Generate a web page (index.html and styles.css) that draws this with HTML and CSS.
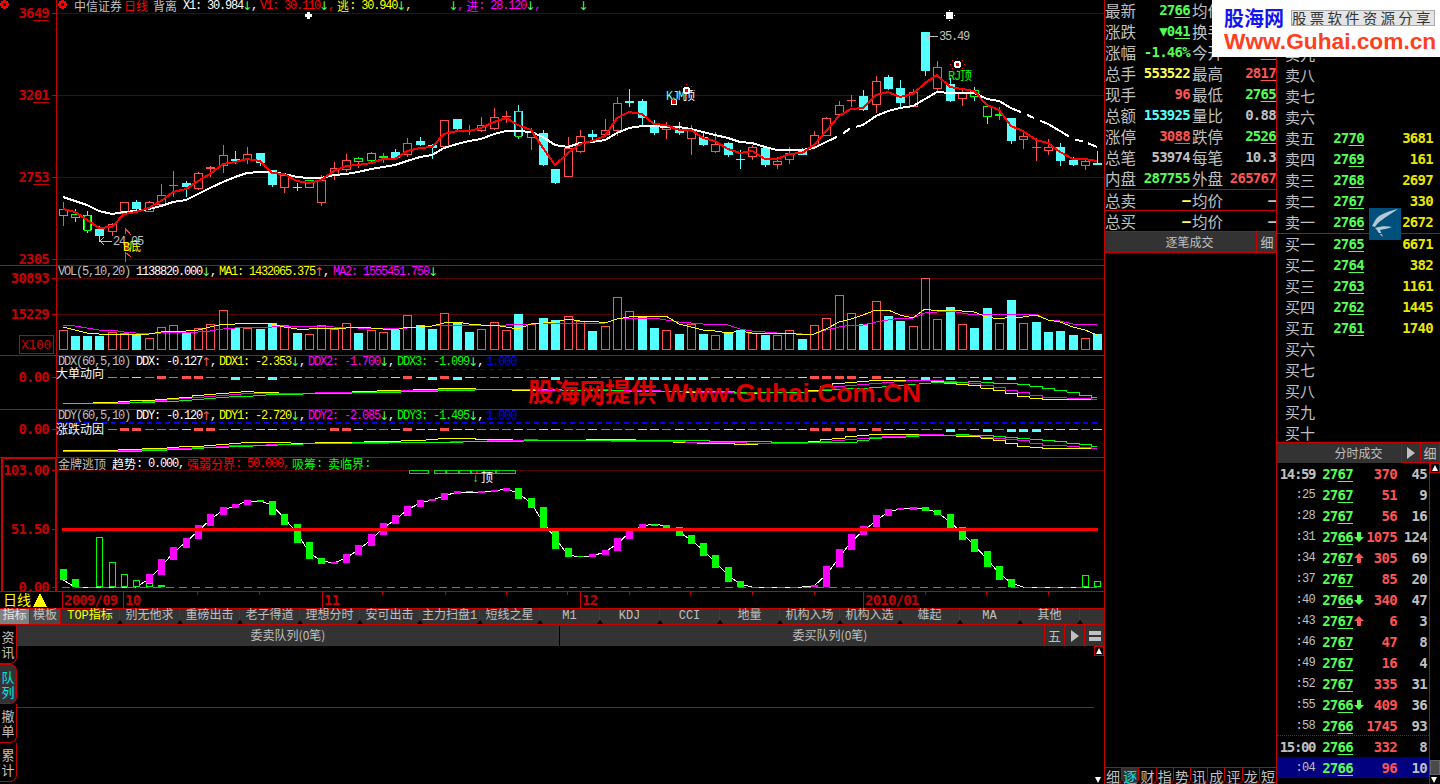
FILE: index.html
```html
<!DOCTYPE html>
<html lang="zh-CN">
<head>
<meta charset="utf-8">
<title>中信证券 日线</title>
<link rel="stylesheet" href="styles.css">
</head>
<body>
<div class="app">
  <div class="left">
    <section class="panel p-main">
      <svg class="plot" id="main" width="1104" height="265"></svg>
      <div class="title t-main"><span class="cn gray">中信证券</span><span class="cn red g2">日线</span><span class="cn gray g5">背离</span><span class="white g6">X1: 30.984</span><i class="ar dn">↓</i><span class="white">,</span><span class="red g3">V1: 30.110</span><i class="ar dn">↓</i><span class="red">,</span><span class="cn yellow g3">逃</span><span class="yellow">: 30.940</span><i class="ar dn">↓</i><span class="yellow">,</span><i class="ar dn g38">↓</i><span class="magenta">,</span><span class="cn magenta g3">进</span><span class="magenta">: 28.120</span><i class="ar dn">↓</i><span class="magenta">,</span><i class="ar dn g39">↓</i></div>
    </section>
    <section class="panel p-vol">
      <svg class="plot" id="vol" width="1104" height="89"></svg>
      <div class="title"><span class="gray">VOL(5,10,20) </span><span class="white">1138820.000</span><i class="ar dn">↓</i><span class="white">,</span><span class="yellow g3">MA1: 1432065.375</span><i class="ar up">↑</i><span class="white">,</span><span class="magenta g4">MA2: 1555451.750</span><i class="ar dn">↓</i></div>
    </section>
    <section class="panel p-ddx">
      <svg class="plot" id="ddx" width="1104" height="53"></svg>
      <div class="title"><span class="gray">DDX(60,5,10) </span><span class="white">DDX: -0.127</span><i class="ar up">↑</i><span class="white">,</span><span class="yellow g3">DDX1: -2.353</span><i class="ar dn">↓</i><span class="white">,</span><span class="magenta g3">DDX2: -1.700</span><i class="ar dn">↓</i><span class="white">,</span><span class="green g3">DDX3: -1.099</span><i class="ar dn">↓</i><span class="white">,</span><span class="blue g3">1.000</span></div>
      <div class="subname">大单动向</div>
    </section>
    <section class="panel p-ddy">
      <svg class="plot" id="ddy" width="1104" height="47"></svg>
      <div class="title"><span class="gray">DDY(60,5,10) </span><span class="white">DDY: -0.120</span><i class="ar up">↑</i><span class="white">,</span><span class="yellow g3">DDY1: -2.720</span><i class="ar dn">↓</i><span class="white">,</span><span class="magenta g3">DDY2: -2.085</span><i class="ar dn">↓</i><span class="white">,</span><span class="green g3">DDY3: -1.495</span><i class="ar dn">↓</i><span class="white">,</span><span class="blue g3">1.000</span></div>
      <div class="subname sub-ddy">涨跌动因</div>
    </section>
    <section class="panel p-gold">
      <svg class="plot" id="gold" width="1104" height="133"></svg>
      <div class="title"><span class="cn gray">金牌逃顶</span><span class="cn white g6">趋势</span><span class="white">: 0.000,</span><span class="cn red g3">强弱分界</span><span class="red">: 50.000,</span><span class="cn bright g3">吸筹</span><span class="bright">: </span><span class="cn bright">卖临界</span><span class="bright">:</span></div>
    </section>
    <section class="panel p-axis">
      <svg class="plot" id="axis" width="1104" height="16"></svg>
    </section>
    <nav class="tabs">
      <a class="tab t-sel">指标</a><a class="tab t-sel2">模板</a><a class="tab t-wide t-top">TOP指标</a><a class="tab t-wide">别无他求</a><a class="tab t-wide">重磅出击</a><a class="tab t-wide">老子得道</a><a class="tab t-wide">理想分时</a><a class="tab t-wide">安可出击</a><a class="tab t-wide">主力扫盘1</a><a class="tab t-wide">短线之星</a><a class="tab t-wide">M1</a><a class="tab t-wide">KDJ</a><a class="tab t-wide">CCI</a><a class="tab t-wide">地量</a><a class="tab t-wide">机构入场</a><a class="tab t-wide">机构入选</a><a class="tab t-wide">雄起</a><a class="tab t-wide">MA</a><a class="tab t-wide">其他</a><a class="tab t-last"></a>
    </nav>
    <section class="queue">
      <nav class="vtabs">
        <a class="vtab">资<br>讯</a><a class="vtab v-on">队<br>列</a><a class="vtab">撤<br>单</a><a class="vtab">累<br>计</a>
      </nav>
      <div class="qmain">
        <header class="qhead">
          <div class="qh-sell">委卖队列(0笔)</div>
          <div class="qh-buy">委买队列(0笔)</div>
          <div class="qbtn">五</div>
          <div class="qbtn"><svg class="tri" viewBox="0 0 8 12"><path d="M0 0l8 6-8 6z"/></svg></div>
          <div class="qbtn"><svg class="eq" viewBox="0 0 12 10"><path d="M0 0h12v4H0zM0 6h12v4H0z"/></svg></div>
        </header>
        <div class="qbody">
          <div class="qrows"><div class="qrow"></div><div class="qrow2"></div></div>
          <div class="scroll">
            <div class="sbtn"><svg viewBox="0 0 8 8"><path d="M4 1l3 6H1z"/></svg></div>
            <div class="sbtn sbtn-d"><svg viewBox="0 0 8 8"><path d="M1 1h6L4 7z"/></svg></div>
          </div>
        </div>
      </div>
    </section>
    <div class="wm"><span class="wm-cn">股海网提供</span> Www.Guhai.Com.CN</div>
  </div>

  <aside class="mid">
    <div class="quote">
      <div class="qr"><b>最新</b><span class="v lg">27<u>66</u></span><b>均价</b><span class="v"></span></div>
      <div class="qr"><b>涨跌</b><span class="v lg">▼0<u>41</u></span><b>换手</b><span class="v"></span></div>
      <div class="qr"><b>涨幅</b><span class="v lg">-1.46%</span><b>今开</b><span class="v lr">27<u>77</u></span></div>
      <div class="qr"><b>总手</b><span class="v ly">553522</span><b>最高</b><span class="v lr">28<u>17</u></span></div>
      <div class="qr"><b>现手</b><span class="v lr">96</span><b>最低</b><span class="v lg">27<u>65</u></span></div>
      <div class="qr"><b>总额</b><span class="v lc">153925</span><b>量比</b><span class="v lw">0.88</span></div>
      <div class="qr"><b>涨停</b><span class="v lr">30<u>88</u></span><b>跌停</b><span class="v lg">25<u>26</u></span></div>
      <div class="qr"><b>总笔</b><span class="v lw">53974</span><b>每笔</b><span class="v lw">10.3</span></div>
      <div class="qr"><b>内盘</b><span class="v lg">287755</span><b>外盘</b><span class="v lr">265767</span></div>
      <div class="qr qr-t"><b>总卖</b><span class="v ly">—</span><b>均价</b><span class="v lw">—</span></div>
      <div class="qr qr-t"><b>总买</b><span class="v ly">—</span><b>均价</b><span class="v lw">—</span></div>
    </div>
    <div class="mhead"><div class="mh-t">逐笔成交</div><div class="mh-b">细</div></div>
    <div class="mspace"></div>
    <nav class="btabs"><a>细</a><a class="on">逐</a><a>财</a><a>指</a><a>势</a><a>讯</a><a>成</a><a>评</a><a>龙</a><a>短</a></nav>
  </aside>

  <aside class="right">
    <div class="book">
      <div class="br"><b>卖十</b></div>
      <div class="br"><b>卖九</b></div>
      <div class="br"><b>卖八</b></div>
      <div class="br"><b>卖七</b></div>
      <div class="br"><b>卖六</b></div>
      <div class="br"><b>卖五</b><span class="v lg">27<u>70</u></span><span class="v by">3681</span></div>
      <div class="br"><b>卖四</b><span class="v lg">27<u>69</u></span><span class="v by">161</span></div>
      <div class="br"><b>卖三</b><span class="v lg">27<u>68</u></span><span class="v by">2697</span></div>
      <div class="br"><b>卖二</b><span class="v lg">27<u>67</u></span><span class="v by">330</span></div>
      <div class="br"><b>卖一</b><span class="v lg">27<u>66</u></span><span class="v by">2672</span></div>
    </div>
    <div class="book book-buy">
      <div class="br"><b>买一</b><span class="v lg">27<u>65</u></span><span class="v by">6671</span></div>
      <div class="br"><b>买二</b><span class="v lg">27<u>64</u></span><span class="v by">382</span></div>
      <div class="br"><b>买三</b><span class="v lg">27<u>63</u></span><span class="v by">1161</span></div>
      <div class="br"><b>买四</b><span class="v lg">27<u>62</u></span><span class="v by">1445</span></div>
      <div class="br"><b>买五</b><span class="v lg">27<u>61</u></span><span class="v by">1740</span></div>
      <div class="br"><b>买六</b></div>
      <div class="br"><b>买七</b></div>
      <div class="br"><b>买八</b></div>
      <div class="br"><b>买九</b></div>
      <div class="br"><b>买十</b></div>
    </div>
    <svg class="bird" viewBox="0 0 32 32"><rect width="32" height="32" fill="#00507e"/><path d="M29 1C20 3 11 6 7 11L3 18l3 1c3-5 7-7 11-10 4-3 8-5 12-8z" fill="#b5c9d3"/><path d="M6 20c6-2 12-2 17-1-5 2-9 2-12 3l3 7c-3-2-5-5-6-7z" fill="#b5c9d3"/></svg>
    <div class="rhead"><div class="rh-t">分时成交</div><div class="rh-b"><svg class="tri" viewBox="0 0 8 12"><path d="M0 0l8 6-8 6z"/></svg></div><div class="rh-b">细</div></div>
    <div class="tickwrap">
      <div class="ticks">
        <div class="tk"><span class="tm tm-b">14:59</span><span class="v lg">27<u>67</u></span><i></i><span class="v lr">370</span><span class="v lw">45</span></div>
        <div class="tk"><span class="tm">:25</span><span class="v lg">27<u>67</u></span><i></i><span class="v lr">51</span><span class="v lw">9</span></div>
        <div class="tk"><span class="tm">:28</span><span class="v lg">27<u>67</u></span><i></i><span class="v lr">56</span><span class="v lw">16</span></div>
        <div class="tk"><span class="tm">:31</span><span class="v lg">27<u>66</u></span><i><svg class="tka dn" viewBox="0 0 10 10"><path d="M3 0h4v5h3L5 10 0 5h3z"/></svg></i><span class="v lr">1075</span><span class="v lw">124</span></div>
        <div class="tk"><span class="tm">:34</span><span class="v lg">27<u>67</u></span><i><svg class="tka up" viewBox="0 0 10 10"><path d="M5 0l5 5H7v5H3V5H0z"/></svg></i><span class="v lr">305</span><span class="v lw">69</span></div>
        <div class="tk"><span class="tm">:37</span><span class="v lg">27<u>67</u></span><i></i><span class="v lr">85</span><span class="v lw">20</span></div>
        <div class="tk"><span class="tm">:40</span><span class="v lg">27<u>66</u></span><i><svg class="tka dn" viewBox="0 0 10 10"><path d="M3 0h4v5h3L5 10 0 5h3z"/></svg></i><span class="v lr">340</span><span class="v lw">47</span></div>
        <div class="tk"><span class="tm">:43</span><span class="v lg">27<u>67</u></span><i><svg class="tka up" viewBox="0 0 10 10"><path d="M5 0l5 5H7v5H3V5H0z"/></svg></i><span class="v lr">6</span><span class="v lw">3</span></div>
        <div class="tk"><span class="tm">:46</span><span class="v lg">27<u>67</u></span><i></i><span class="v lr">47</span><span class="v lw">8</span></div>
        <div class="tk"><span class="tm">:49</span><span class="v lg">27<u>67</u></span><i></i><span class="v lr">16</span><span class="v lw">4</span></div>
        <div class="tk"><span class="tm">:52</span><span class="v lg">27<u>67</u></span><i></i><span class="v lr">335</span><span class="v lw">31</span></div>
        <div class="tk"><span class="tm">:55</span><span class="v lg">27<u>66</u></span><i><svg class="tka dn" viewBox="0 0 10 10"><path d="M3 0h4v5h3L5 10 0 5h3z"/></svg></i><span class="v lr">409</span><span class="v lw">36</span></div>
        <div class="tk tk-dot"><span class="tm">:58</span><span class="v lg">27<u>66</u></span><i></i><span class="v lr">1745</span><span class="v lw">93</span></div>
        <div class="tk"><span class="tm tm-b">15:00</span><span class="v lg">27<u>66</u></span><i></i><span class="v lr">332</span><span class="v lw">8</span></div>
        <div class="tk tk-on"><span class="tm">:04</span><span class="v lg">27<u>66</u></span><i></i><span class="v lr">96</span><span class="v lw">10</span></div>
      </div>
      <div class="scroll scroll-r">
        <div class="sbtn"><svg viewBox="0 0 8 8"><path d="M4 1l3 6H1z"/></svg></div>
        <div class="sthumb"></div>
        <div class="sbtn sbtn-d"><svg viewBox="0 0 8 8"><path d="M1 1h6L4 7z"/></svg></div>
      </div>
    </div>
  </aside>

  <div class="logo">
    <div class="logo-top"><span class="logo-cn">股海网</span><span class="logo-tag">股票软件资源分享</span></div>
    <div class="logo-url">Www.Guhai.com.cn</div>
  </div>
</div>
<script src="app.js"></script>
</body>
</html>
```
FILE: styles.css
```css
html,body{margin:0;padding:0;background:#000;overflow:hidden}
a{display:block}
b{font-weight:400}
u{text-decoration:underline;text-decoration-thickness:1px;text-underline-offset:2px}
.app{position:relative;display:grid;grid-template-columns:1105px 172px 163px;width:1440px;height:784px;overflow:hidden;color:#c0c0c0;font-family:"Noto Sans CJK SC",sans-serif}

/* left column */
.left{position:relative;display:flex;flex-direction:column;width:1105px;height:784px;box-sizing:border-box;border-right:1px solid #c80000}
.panel{position:relative;box-sizing:border-box;border-bottom:1px solid #c80000;flex:none}
.p-main{height:266px}.p-vol{height:90px}.p-ddx{height:54px}.p-ddy{height:48px}.p-gold{height:134px}
.p-axis{height:16px;border-bottom:0}
.plot{display:block;overflow:visible}
.plot *{shape-rendering:crispEdges}
.plot text{font-family:"DejaVu Sans Mono",monospace;letter-spacing:-.8px;font-weight:700;font-size:14px;fill:#c80000}
.plot text.ax-s{font-weight:400;font-size:13px;letter-spacing:-.3px}
.plot text.cjk{font-family:"Noto Sans CJK SC",sans-serif;font-weight:400;letter-spacing:0;font-size:12px}
.plot text.sm{font-family:"Liberation Mono",monospace;font-weight:400;font-size:12px;letter-spacing:-1.2px;fill:#c0c0c0}
.plot text.ydate{font-family:"Noto Sans CJK SC",sans-serif;font-weight:400;letter-spacing:0;font-size:14px;fill:#ffff00}

.title{position:absolute;left:58px;top:0;display:flex;white-space:pre;font:12px/12px "Liberation Mono",monospace;letter-spacing:-1.2px}
.t-main{left:74px}
.title .cn{font-family:"Noto Sans CJK SC",sans-serif;letter-spacing:0}
.ar{display:flex;justify-content:center;width:8px;font-style:normal;font-family:"DejaVu Sans",sans-serif;font-size:12px;letter-spacing:0}
.ar.dn{color:#54ff54}.ar.up{color:#ff5454}
.gray{color:#c0c0c0}.white{color:#fff}.red{color:#ff0000}.yellow{color:#ffff00}.magenta{color:#ff00ff}.green,.bright{color:#00ff00}.blue{color:#0000ff}
.g2{margin-left:2px}.g3{margin-left:3px}.g4{margin-left:4px}.g5{margin-left:5px}.g6{margin-left:6px}.g38{margin-left:38px}.g39{margin-left:39px}
.subname{position:absolute;left:56px;top:10px;font-size:12px;line-height:14px;color:#fff}
.sub-ddy{top:12px}
.wm{position:absolute;left:528px;top:376px;white-space:nowrap;font:700 26.3px/30px "Liberation Sans",sans-serif;color:#dc0000}
.wm-cn{font-family:"Noto Sans CJK SC",sans-serif;font-size:26px;letter-spacing:-.4px}

/* indicator tabs */
.tabs{display:flex;flex:none;height:17px;box-sizing:border-box;border-top:1px solid #c80000;border-bottom:1px solid #c80000}
.tab{position:relative;flex:none;box-sizing:border-box;background:#333;border-right:1px solid #c80000;font:12px/15px "Liberation Mono","Noto Sans CJK SC",monospace;text-align:center;color:#c0c0c0;overflow:visible}
.tab::after{content:"";position:absolute;right:-4px;bottom:0;width:0;height:0;border-left:3px solid transparent;border-right:3px solid transparent;border-bottom:4px solid #000;z-index:2}
.t-sel{width:30px;background:#808080;color:#e6e6e6}
.t-sel2{width:31px;background:#4a4a4a}
.t-sel::after,.t-sel2::after{display:none}
.t-wide{width:60px}
.t-top{width:59px;color:#ffff00}
.t-last{flex:1;border-right:0}
.t-last::after{display:none}

/* queue */
.queue{flex:1;display:grid;grid-template-columns:17px 1fr;min-height:0}
.vtabs{display:flex;flex-direction:column;background:#000}
.vtab{flex:none;height:39px;box-sizing:border-box;background:#000;border:solid #c80000;border-width:0 1px 1px 0;border-radius:0 0 7px 0;font-size:13px;line-height:15px;padding-top:4px;text-align:center;color:#c0c0c0}
.v-on{height:40px;background:#333;color:#00e6e6;border-radius:0 7px 7px 0;border-top:1px solid #c80000}
.qmain{display:flex;flex-direction:column;min-width:0}
.qhead{flex:none;display:flex;height:21px;background:#333;font:12px/20px "Noto Sans CJK SC",sans-serif;text-align:center}
.qh-sell{width:543px;border-right:1px solid #000;box-sizing:border-box}
.qh-buy{width:484px;box-sizing:border-box;padding-left:56px}
.qbtn{flex:none;width:20px;box-sizing:border-box;border-left:1px solid #c80000;display:flex;align-items:center;justify-content:center;font-size:13px}
.tri{width:8px;height:12px;fill:#c0c0c0}
.eq{width:12px;height:10px;fill:#c0c0c0}
.qbody{flex:1;display:flex;min-height:0}
.qrows{flex:1;display:flex;flex-direction:column}
.qrow{height:61px;border-bottom:1px solid #c80000;flex:none}
.qrow2{flex:1}
.scroll{flex:none;width:10px;display:flex;flex-direction:column;background:#000}
.sbtn{flex:none;height:10px;box-sizing:border-box;border:1px solid #c80000;background:#000;display:flex}
.sbtn svg{width:8px;height:8px;fill:#fff}
.sbtn-d{margin-top:auto;border:0;height:8px}
.sthumb{flex:none;margin-top:auto;height:15px;background:#4a4a4a;border:1px solid #666;box-sizing:border-box}
.sthumb+.sbtn-d{margin-top:1px}

/* middle column */
.mid{display:flex;flex-direction:column;height:784px;box-sizing:border-box}
.quote{flex:none}
.qr{display:grid;grid-template-columns:32px 53px 33px 53px;height:21px;box-sizing:border-box;padding-bottom:2px;line-height:18px;align-items:center}
.qr b{font-size:15.5px;color:#c0c0c0;white-space:nowrap}
.qr b:nth-child(3){padding-left:2px}
.qr-t{border-top:1px solid #c80000;padding-bottom:1px}
.v{font:700 14px/18px "DejaVu Sans Mono",monospace;letter-spacing:-.72px;text-align:right;white-space:nowrap}
.lg{color:#54ff54}.lr{color:#ff5454}.ly{color:#ffff54}.lc{color:#54ffff}.lw{color:#c0c0c0}.by{color:#e8e800}
.mhead{flex:none;display:flex;height:22px;box-sizing:border-box;border-top:1px solid #c80000;border-bottom:1px solid #c80000;background:#333;font-size:12px;line-height:20px;text-align:center}
.mh-t{flex:1;padding-left:18px}
.mh-b{width:21px;box-sizing:border-box;border-left:1px solid #c80000;font-size:13px}
.mspace{flex:1}
.btabs{flex:none;display:flex;height:17px;box-sizing:border-box;border-top:1px solid #c80000}
.btabs a{flex:1;box-sizing:border-box;text-align:center;font-size:14px;line-height:16px;border:solid #c80000;border-width:0 1px 1px 0;border-radius:0 0 5px 5px}
.btabs .on{background:#333;color:#00e6e6}

/* right column */
.right{position:relative;display:flex;flex-direction:column;height:784px;box-sizing:border-box;border-left:1px solid #c80000;margin-left:-1px;width:164px}
.book{flex:none;padding-top:22px;height:233px;box-sizing:border-box}
.book-buy{position:relative;z-index:1;padding-top:0;height:209px;overflow:hidden;border-top:1px solid #c80000}
.book-buy .br:first-child{margin-top:-1px}
.br{display:grid;grid-template-columns:40px 39px 69px;height:21px;line-height:20px;padding-left:8px;align-items:center}
.br b{font-size:15px;white-space:nowrap}
.bird{position:absolute;left:92px;top:208px;width:32px;height:32px}
.rhead{flex:none;display:flex;height:21px;box-sizing:border-box;border-top:1px solid #c80000;background:#333;font-size:12px;line-height:19px;text-align:center}
.rh-t{flex:1;padding-left:38px}
.rh-b{width:20px;box-sizing:border-box;border:solid #c80000;border-width:0 1px 1px 1px;margin-left:-1px;display:flex;align-items:center;justify-content:center;font-size:13px}
.tickwrap{flex:1;display:flex;min-height:0}
.ticks{flex:none;width:153px;box-sizing:border-box;border-right:1px solid #c80000}
.tk{position:relative;display:grid;grid-template-columns:38px 38px 11px 33px 30px;height:21px;align-items:center}
.tk i{display:flex;align-items:center;justify-content:center}
.tm{text-align:right;font:12px/20px "Liberation Mono",monospace;letter-spacing:-.7px;color:#c0c0c0}
.tm-b{font:700 14px/20px "DejaVu Sans Mono",monospace;letter-spacing:-1.4px}
.tka{width:10px;height:10px;display:block}
.tka.dn{fill:#54ff54}.tka.up{fill:#ff5454}
.tk-dot::after{content:"";position:absolute;left:0;right:0;bottom:0;border-bottom:1px dotted #c80000}
.tk-on{background:#000080}

/* site logo */
.logo{position:absolute;left:1212px;top:0;width:228px;height:57px;background:#fff;box-sizing:border-box;padding:7px 2px 0 12px}
.logo-top{display:flex;align-items:center;height:21px}
.logo-cn{font:700 20px/21px "Noto Sans CJK SC",sans-serif;color:#1414f0}
.logo-tag{margin-left:7px;width:144px;box-sizing:border-box;height:16px;background:#e4e4e4;border:1px solid #aaa;font-size:14.5px;line-height:14px;letter-spacing:3.2px;color:#333;white-space:nowrap;overflow:hidden}
.logo-url{font:700 22.7px/24px "Liberation Sans",sans-serif;color:#ff4020;margin-top:1px;white-space:nowrap}
```
FILE: app.js
```js
(function(){
var X=function(i){return Math.round(62.5+12.32*i)};
var RED='#c80000',GRID='#5a0000',UP='#ff5050',CY='#54ffff',GR='#00ff00',MG='#ff00ff',YL='#ffff00';
var LEFT=57,RIGHT=1104;
function P(id,top){this.el=document.getElementById(id);this.top=top;this.s=''}
P.prototype={
 r:function(x,y,w,h,f){this.s+='<rect x="'+x+'" y="'+(y-this.top)+'" width="'+w+'" height="'+h+'" fill="'+f+'"/>'},
 o:function(x,y,w,h,st,f){this.s+='<rect x="'+(x+.5)+'" y="'+(Math.round(y-this.top)+.5)+'" width="'+w+'" height="'+Math.round(h)+'" fill="'+(f||'#000')+'" stroke="'+st+'"/>'},
 l:function(x1,y1,x2,y2,c,w,d){this.s+='<line x1="'+x1+'" y1="'+(y1-this.top)+'" x2="'+x2+'" y2="'+(y2-this.top)+'" stroke="'+c+'" stroke-width="'+(w||1)+'"'+(d?' stroke-dasharray="'+d+'"':'')+'/>'},
 p:function(pts,c,w){var t=this.top;this.s+='<polyline fill="none" stroke="'+c+'" stroke-width="'+w+'" stroke-linejoin="round" points="'+pts.map(function(q){return q[0]+','+(q[1]-t)}).join(' ')+'"/>'},
 t:function(x,y,str,cls,anchor,fill){this.s+='<text x="'+x+'" y="'+(y-this.top)+'"'+(cls?' class="'+cls+'"':'')+(anchor?' text-anchor="'+anchor+'"':'')+(fill?' style="fill:'+fill+'"':'')+'>'+str+'</text>'},
 done:function(){this.el.innerHTML=this.s}
};
function interp(keys){var a=[],k=0;for(var i=0;i<=84;i++){while(k<keys.length-2&&keys[k+1][0]<=i)k++;var A=keys[k],B=keys[k+1];var y=A[1]+(B[1]-A[1])*(Math.min(i,B[0])-A[0])/(B[0]-A[0]);a.push(y)}return a}
function stepLine(pn,keys,base,c,w){var a=interp(keys),pts=[];a.forEach(function(v,i){var y=Math.round(base+v/3);pts.push([i?X(i)-6:X(i),y]);pts.push([i<84?X(i)+6:X(i),y])});pn.p(pts,c,w)}
function smooth(vals,base){return vals.map(function(v,i){return [X(i),Math.round(base+v/3)]})}
function axisFrame(pn,h){pn.r(56,pn.top,1,h,RED)}
function tick(pn,y,c){pn.r(52,y,4,1,c||RED)}
function gear(pn,x,y){pn.r(x-3,y-3,7,7,'#ff0000');pn.r(x-4,y-1,9,3,'#ff0000');pn.r(x-1,y-4,3,9,'#ff0000');pn.r(x-1,y-1,3,3,'#000')}
function sun(pn,x,y){[[0,-6],[5,-4],[-5,-4],[7,0],[-7,0],[5,4],[-5,4],[0,6]].forEach(function(d){pn.r(x+d[0],y+d[1],1,1,'#ff0000')});pn.r(x-3,y-2,7,5,'#fff');pn.r(x-2,y-3,5,7,'#fff');pn.r(x-1,y-1,3,3,'#e00000')}

/* main candles: [type, bodyTop, bodyBot, hi, lo] in 3x coordinates */
var C=[['h',628,646,606,678],['g',642,650,628,668],['x',646,690,632,698],['c',686,708,678,725],['r',672,692,668,708],['r',607,640,607,640],['c',607,627,600,635],['r',607,634,603,636],['r',584,610,552,610],['r',555,557,513,590],
['c',549,561,543,592],['r',520,566,516,570],['r',502,509,498,530],['r',466,497,435,518],['c',477,483,452,490],['r',463,478,440,490],['c',460,490,460,500],['c',511,555,510,560],['r',524,560,518,578],['c',562,566,548,572],
['h',541,562,541,562],['r',541,607,525,617],['r',505,522,486,540],['r',481,508,462,515],['h',475,485,472,505],['h',460,482,456,490],['h',468,470,460,490],['c',456,473,448,480],['r',428,462,414,470],['c',423,434,410,438],
['c',436,445,432,477],['r',361,440,361,440],['c',357,387,357,392],['r',390,393,375,405],['r',376,392,350,395],['r',350,382,323,390],['r',347,351,333,370],['x',334,410,315,418],['h',397,412,385,452],['c',400,495,390,498],
['c',507,549,507,552],['r',444,527,410,527],['r',408,452,390,460],['c',402,412,390,420],['r',391,404,357,410],['r',310,392,291,408],['c',302,309,267,322],['c',303,354,298,376],['c',380,398,360,404],['r',378,388,366,416],
['c',387,398,366,404],['r',390,413,376,465],['c',410,435,395,438],['r',433,455,396,458],['c',430,465,425,470],['c',476,479,450,506],['r',442,470,436,480],['c',445,497,442,502],['r',484,494,470,506],['r',458,476,440,492],
['c',450,464,445,466],['r',406,438,392,445],['r',355,407,352,410],['r',316,342,304,345],['r',300,304,285,320],['c',288,330,270,334],['r',244,314,228,340],['c',231,266,226,272],['c',264,308,240,325],['r',275,316,268,322],
['c',96,213,96,228],['r',202,265,183,275],['c',252,303,235,306],['r',278,292,268,320],['g',271,290,262,305],['g',319,350,319,372],['h',343,346,320,360],['c',354,423,354,432],['r',408,418,400,447],['r',440,442,415,484],
['r',442,452,418,465],['c',441,483,428,498],['c',480,495,470,497],['r',482,494,476,510],['c',489,495,453,496]];
var REDL=[628,636,660,684,680,642,636,624,602,576,568,542,522,492,486,476,482,520,522,544,550,540,512,498,494,488,478,476,452,443,442,402,393,393,385,365,355,376,390,444,494,
460,432,424,408,355,335,342,371,376,389,389,413,422,448,458,452,476,476,462,460,436,392,348,326,325,285,275,290,282,248,225,262,267,272,315,330,378,392,420,430,456,476,476,483];
var WHT=[590,602,615,634,641,637,634,628,618,605,600,581,565,545,532,520,515,517,523,530,534,534,526,522,516,508,501,496,484,472,466,444,432,424,416,403,392,392,396,412,435,
440,430,425,420,400,384,377,378,380,382,386,396,404,414,427,429,440,449,450,450,444,425,407,385,375,347,332,325,318,298,275,278,279,280,296,303,325,340,358,372,393,416,427,441];

var m=new P('main',0);
[13,95,177,259].forEach(function(y){m.r(LEFT,y,RIGHT-LEFT,1,GRID);tick(m,y)});
axisFrame(m,265);
[['3649',13,1],['3201',95,1],['2753',177,1],['2305',259,0]].forEach(function(a){m.t(49,a[1]+5,a[0],'','end');if(a[2])m.r(33,a[1]+7,16,1,RED)});
gear(m,4,4);gear(m,62,4);
C.forEach(function(c,i){var x=X(i),ty=c[0],T=c[1]/3,B=c[2]/3,H=c[3]/3,L=c[4]/3;
 var wc=(ty==='c'||ty==='g'||ty==='x')?CY:UP;
 m.r(x,Math.round(H),1,Math.round(L-H),wc);
 if(ty==='c'){m.r(x-4,Math.round(T),9,Math.max(1,Math.round(B-T)),CY)}
 else if(ty==='r'){if(c[2]-c[1]<8)m.r(x-4,Math.round(T),9,Math.max(1,Math.round(B-T)),UP);else m.o(x-4,T,8,B-T,UP)}
 else if(ty==='x'){m.r(x-4,Math.round(T),9,Math.round(B-T),CY);m.o(x-3,T,6,B-T,GR)}
 else{if(c[2]-c[1]<6)m.r(x-4,Math.round(T),9,2,GR);else m.o(x-4,T,8,B-T,GR)}
});
m.p(smooth(WHT,0),'#fff',2);
[[837,843],[850,856],[1021,1027],[1034,1040],[1069,1075],[1083,1088]].forEach(function(g){var i=Math.round((g[0]-62.5)/12.32);var y=Math.round(WHT[i]/3);m.r(g[0],y-5,g[1]-g[0],11,'#000')});
m.p(smooth(REDL,0),'#ff0000',2);
/* annotations */
m.r(305,14,7,3,'#fff');m.r(307,12,3,7,'#fff');
m.r(946,12,7,7,'#fff');[[949,10],[949,20],[944,15],[954,15]].forEach(function(d){m.r(d[0],d[1],1,1,'#fff')});
function larrow(x,w,y){m.r(x,y,w,1,'#c0c0c0');m.l(x,y,x+4,y-4,'#c0c0c0');m.l(x,y,x+4,y+4,'#c0c0c0')}
larrow(100,12,241);m.t(113,245,'24.05','sm');
m.l(125,228,131,235,'#ff4040');m.l(125,228,125,234,'#ff4040');m.l(125,252,125,262,'#ff4040');m.l(125,252,131,257,'#ff4040');
m.r(124,242,4,8,'#ff0000');m.t(123,251,'B','sm','', '#ffff00');m.t(129,251,'底','cjk','', '#ffff00');
sun(m,957,64);m.t(948,80,'RJ','sm','', GR);m.t(960,80,'顶','cjk','', GR);
m.t(666,100,'KJ','sm','', CY);m.t(678,100,'M','sm','', CY);m.t(683,100,'顶','cjk','', '#fff');sun(m,686,90);
m.r(671,100,6,5,'#fff');m.r(672,100,4,4,'#e00000');
larrow(926,12,36);m.t(939,40,'35.49','sm');
m.done();

/* volume */
var VH=[205,222,222,222,210,212,218,229,196,190,212,199,187,145,197,197,201,184,190,213,217,190,202,184,213,205,211,205,160,190,201,154,184,210,202,181,205,156,187,168,174,
163,178,207,193,106,148,163,198,205,216,187,216,220,212,205,212,219,220,205,231,190,169,100,154,187,118,162,177,193,49,172,135,187,198,138,184,114,184,180,210,207,219,229,216];
var VTYPE=['r','c','c','c','r','r','c','r','r','r','c','r','r','r','c','r','c','c','r','c','r','r','r','r','c','r','r','c','r','c','c','r','c','c','r','r','r','c','r','c','c',
'r','r','c','r','r','r','c','c','r','c','r','c','r','c','c','r','c','r','r','c','r','r','r','r','c','r','c','c','r','r','r','c','r','c','c','r','c','r','c','c','c','c','r','c'];
var v=new P('vol',266);
[278,314].forEach(function(y){v.r(LEFT,y,RIGHT-LEFT,1,GRID);tick(v,y)});
axisFrame(v,89);
v.t(49,283,'30893','','end');v.t(49,319,'15229','','end');
v.o(19,335,34,18,RED,'none');v.t(21,349,'X100','ax-s');
VH.forEach(function(h,i){var x=X(i),y=Math.round(262+h/3),b=350;if(VTYPE[i]==='c')v.r(x-4,y,9,b-y,CY);else v.o(x-4,y,8,b-y-1,UP)});
var MY=[195,205,212,217,217,217,215,215,210,208,208,205,195,187,187,184,184,185,195,200,202,198,202,199,196,199,200,205,195,195,192,182,179,187,190,190,195,201,186,182,181,
170,176,178,184,170,165,163,163,163,186,195,205,208,212,207,214,214,214,214,220,215,200,180,170,158,145,145,160,167,142,148,145,148,150,166,170,165,165,160,175,180,195,205,218];
var MM=[190,193,198,204,205,210,212,216,212,210,212,210,207,200,198,196,196,194,193,193,193,193,194,196,199,199,200,199,199,195,192,190,189,189,190,189,188,187,187,184,182,
182,182,182,182,170,168,168,169,175,180,182,185,185,188,200,207,211,212,213,215,215,205,195,190,188,181,175,168,168,152,150,147,152,158,155,160,157,157,155,173,178,185,187,190];
v.p(smooth(MM,262),MG,1);v.p(smooth(MY,262),YL,1);
v.done();

/* DDX / DDY */
function ddPanel(pn,h,label,blueY,midY,thickR,thickC,lines,bw){
 axisFrame(pn,h);tick(pn,midY);
 pn.t(49,midY+5,label,'','end');
 pn.l(LEFT,blueY,1100,blueY,'#0000ff',bw,'5 4');
 for(var i=4;i<=84;i++){var x=X(i),c=VTYPE[i]==='c'?CY:UP;var up=thickR.indexOf(i)>=0,dn=thickC.indexOf(i)>=0;
  var col=up?UP:(dn?CY:c);
  pn.r(x-4,midY-(up?1:0),9,(up||dn)?3:1,col)}
 stepLine(pn,lines.y,262,YL,1);stepLine(pn,lines.m,262,MG,1);stepLine(pn,lines.g,262,GR,1);
}
var dx=new P('ddx',356);
ddPanel(dx,53,'0.00',369,377,[8,10,11,28,31,61,62,63,64,66],[14,17,30,32,40,46,47,48,49,50,51,52,70,72,75,77],{
 g:[[0,424],[4,423],[8,418],[12,408],[16,398],[20,394],[28,388],[36,380],[40,382],[44,385],[50,387],[60,390],[62,384],[66,374],[70,362],[74,358],[78,366],[84,404]],
 m:[[0,422],[3,424],[5,421],[10,409],[15,393],[19,392],[25,389],[32,380],[40,383],[44,382],[50,387],[55,392],[61,388],[63,372],[66,364],[69,354],[72,356],[75,368],[77,383],[80,405],[84,410]],
 y:[[0,423],[4,420],[8,410],[12,397],[15,388],[20,394],[24,387],[30,381],[32,377],[34,381],[40,385],[45,384],[50,388],[55,392],[60,390],[61,384],[63,362],[66,355],[70,353],[72,363],[74,370],[76,385],[78,403],[80,412],[84,410]]
},1);
dx.done();
var dy=new P('ddy',410);
ddPanel(dy,47,'0.00',423,429,[5,6,11,12,22,23,28,31,61,62,63,64,66],[72,75,77,78,79],{
 g:[[0,568],[6,566],[10,560],[14,552],[20,543],[26,540],[34,538],[40,533],[50,534],[61,541],[64,540],[66,528],[70,520],[73,517],[75,520],[78,527],[81,538],[84,552]],
 m:[[0,566],[4,566],[10,558],[14,550],[20,544],[30,540],[38,532],[44,535],[50,538],[60,544],[62,538],[66,525],[70,516],[74,520],[78,535],[80,548],[84,557]],
 y:[[0,564],[4,563],[8,558],[12,548],[15,540],[20,542],[28,535],[32,527],[34,531],[40,535],[45,530],[50,540],[55,545],[60,543],[62,530],[66,516],[70,515],[74,523],[76,535],[78,552],[80,558],[84,557]]
},2);
dy.done();

/* gold panel */
var g=new P('gold',458);
function gy(v){return Math.round(455+v/3)}
g.r(LEFT,470,RIGHT-LEFT,1,GRID);
g.r(55,458,2,133,RED);g.r(1,458,2,133,RED);g.r(1,458,56,1,RED);
[['103.00',470],['51.50',529],['0.00',587]].forEach(function(a){tick(g,a[1]);g.t(49,a[1]+5,a[0],'','end')});
var GL=[374,395,395,395,395,395,395,372,335,295,262,228,195,165,153,138,137,150,190,235,290,318,324,310,285,255,220,195,165,145,135,122,112,110,110,108,102,115,145,200,250,300,305,302,292,268,235,212,208,213,232,255,285,320,360,387,395,395,395,395,395,392,360,308,262,228,198,170,162,160,162,172,200,235,270,313,355,385,395,395,395,395,395,395,395];
g.p(smooth(GL,455),'#fff',1);
g.l(62,587,1098,587,'#00c800',1,'8 5');
var GB=[[0,'g',342,374],[1,'g',372,395],[3,'h',247,395],[4,'h',322,395],[5,'h',358,395],[6,'h',376,395],[7,'m',357,384],[7,'h',384,395],[8,'m',312,360],[8,'g',391,395],[9,'m',276,315],[10,'m',249,279],[11,'m',210,252],[12,'m',178,213],[13,'m',155,180],[14,'m',147,159],[15,'m',135,150],[16,'g',135,141],[17,'g',138,180],[18,'g',177,210],[19,'g',207,264],[20,'g',261,312],[21,'g',309,327],[22,'m',321,327],[23,'m',297,324],[24,'m',270,300],[25,'m',237,273],[26,'m',204,240],[27,'m',180,207],[28,'m',153,183],[29,'m',135,156],[30,'m',132,138],[31,'m',114,135],[32,'m',108,117],[33,'g',108,112],[34,'m',108,114],[35,'m',105,111],[36,'m',99,107],[37,'g',99,132],[38,'g',129,159],[39,'g',156,222],[40,'g',219,282],
[41,'g',279,306],[42,'g',303,306],[43,'m',297,306],[44,'m',285,300],[45,'m',249,288],[46,'m',219,252],[47,'m',207,222],[48,'g',207,213],[49,'g',210,219],[50,'g',216,243],[51,'g',240,267],[52,'g',264,303],[53,'g',300,339],[54,'g',336,381],[55,'g',378,395],[61,'m',390,395],[62,'m',333,395],[63,'m',282,336],[64,'m',237,285],[65,'m',213,240],[66,'m',180,216],[67,'m',162,183],[68,'m',160,165],[69,'m',156,165],[70,'g',156,168],[71,'g',165,180],[72,'g',177,219],[73,'g',216,255],[74,'g',252,291],[75,'g',288,336],[76,'g',333,375],[77,'g',372,395],[83,'h',361,395],[84,'h',379,395]];
GB.forEach(function(b){var x=X(b[0]),T=gy(b[2]),B=gy(b[3]);if(b[1]==='h')g.o(x-3,T,6,B-T-1,GR);else g.r(x-3,T,7,Math.max(1,B-T),b[1]==='m'?MG:GR)});
g.r(62,528,1036,3,'#ff0000');
[[409,429],[434,446],[446,459],[459,471],[471,484],[484,496],[496,516]].forEach(function(a){g.o(a[0],470,a[1]-a[0]-1,3,'#00e000')});
g.r(476,471,2,2,'#ff0000');
g.t(472,482,'↓','sm','', '#54ff54');g.t(481,482,'顶','cjk','', '#fff');
g.done();

/* date axis */
var a=new P('axis',592);
a.t(3,605,'日线','ydate');
a.s+='<polygon points="40,1 47,15 33,15" fill="#ffff00"/>';
[62,123,322,580,863].forEach(function(x){a.r(x,592,1,16,RED)});
[197,259,382,445,506,567,629,690,752,814,925,986,1048].forEach(function(x){a.r(x,592,1,3,RED)});
[[64,'2009/09'],[125,'10'],[324,'11'],[582,'12'],[865,'2010/01']].forEach(function(d){a.t(d[0],605,d[1])});
a.done();
})();
```
